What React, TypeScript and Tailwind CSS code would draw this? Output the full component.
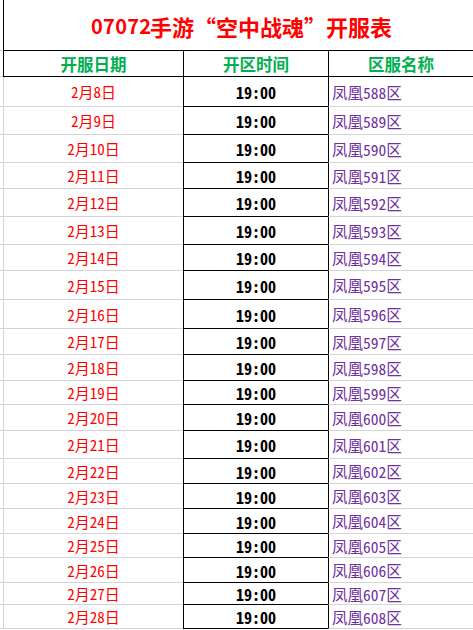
const rows = [
  30, 28, 28, 26, 28, 28, 26, 29, 29, 26, 26, 24, 26, 28, 25, 25, 25, 24, 25, 22, 24,
].map((h, i) => ({ h, day: 8 + i, zone: 588 + i }));

const cjk = {
  fontFamily:
    '"Noto Sans Mono CJK SC", "Noto Sans CJK SC", "Liberation Sans", sans-serif',
};

export default function App() {
  return (
    <div className="h-[630px] w-[473px] overflow-hidden bg-white" style={cjk}>
      {/* Title */}
      <div className="flex h-[51px]">
        <div className="w-[3px] shrink-0 border-b border-[#d4d4d4]" />
        <div className="flex flex-1 items-center justify-center whitespace-nowrap border-b border-l border-black pl-[6px] pt-[2px] text-[22px] font-bold leading-none text-[#ff0000]">
          <span className="inline-block w-[59px] font-['Noto_Sans_CJK_SC'] text-[20px] tracking-[0.3px]">07072</span>
          <span>手游</span>
          <span className="inline-block w-[22px] text-right">“</span>
          <span>空中战魂</span>
          <span className="inline-block w-[22px] text-left">”</span>
          <span>开服表</span>
        </div>
      </div>

      {/* Header */}
      <div className="flex h-[26px] text-[16.5px] font-bold text-[#00b050]">
        <div className="w-[3px] shrink-0 border-b border-[#d4d4d4]" />
        <div className="flex w-[180px] shrink-0 items-center justify-center border-b border-l border-black pt-[1px]">
          开服日期
        </div>
        <div className="flex w-[145px] shrink-0 items-center justify-center border-b border-l border-black pt-[1px]">
          开区时间
        </div>
        <div className="flex flex-1 items-center justify-center border-b border-l border-black pt-[1px]">
          区服名称
        </div>
      </div>

      {/* Rows */}
      {rows.map((r) => (
        <div key={r.day} className="flex" style={{ height: r.h }}>
          <div className="w-[3px] shrink-0 border-b border-[#d4d4d4]" />
          <div className="flex w-[180px] shrink-0 items-center justify-center border-b border-l border-[#d4d4d4] pt-[2px] text-[15px] text-[#ff0000]">
            2月{r.day}日
          </div>
          <div className="flex w-[145px] shrink-0 items-center justify-center border-b border-l border-black pt-[1px] text-[16px] font-bold text-black">
            19:00
          </div>
          <div className="flex flex-1 items-center border-b border-l border-b-[#d4d4d4] border-l-black pl-[3px] pt-[2px] text-[15.5px] text-[#7030a0]">
            凤凰{r.zone}区
          </div>
        </div>
      ))}
    </div>
  );
}
